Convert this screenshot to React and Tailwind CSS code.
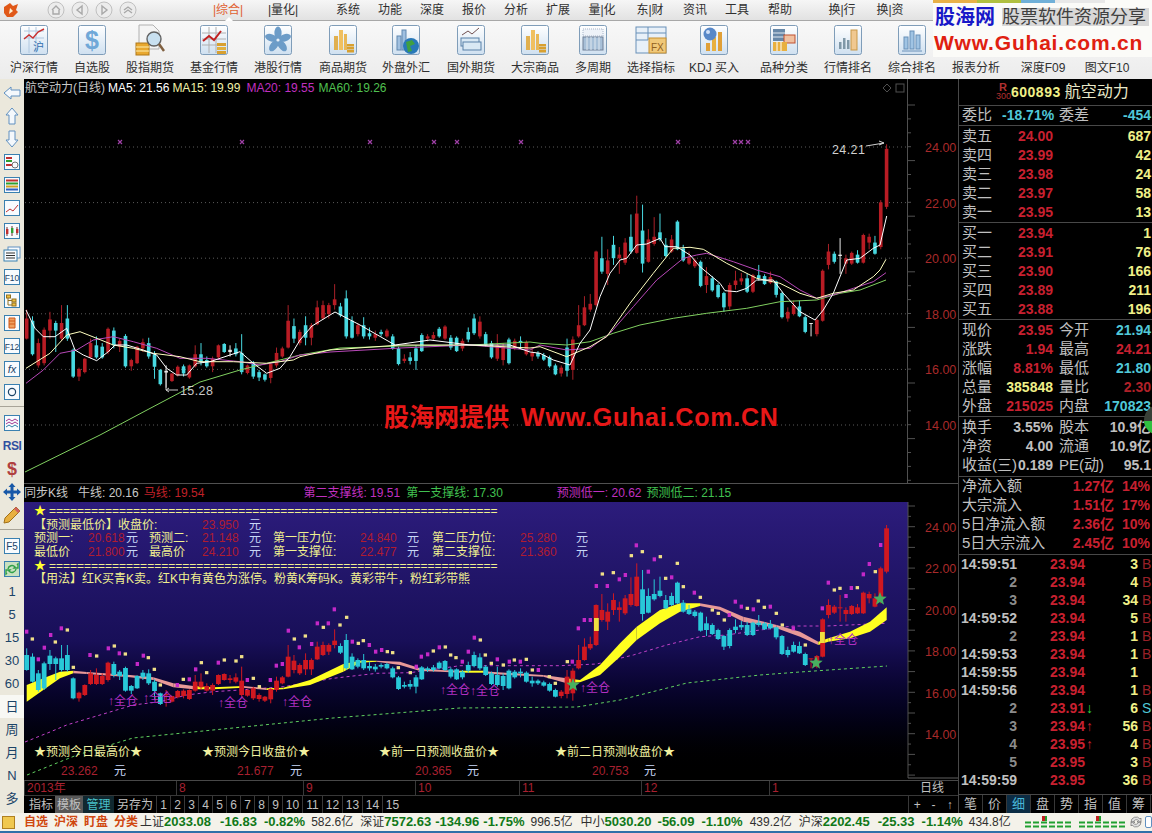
import React from "react";

// candles: body top, body bottom, wick top, wick bottom (lower pane pixels x3), colour in the upper pane
const CANDLES = [
  [195,240,175,242,"r"],[200,275,190,278,"c"],[250,300,240,305,"r"],[220,295,215,300,"r"],[197,222,180,240,"r"],
  [205,222,200,270,"c"],[205,240,165,245,"r"],[195,240,165,245,"c"],[265,325,262,328,"c"],[308,325,305,335,"r"],
  [285,315,283,318,"r"],[250,282,240,285,"r"],[255,282,235,285,"c"],[258,282,250,285,"c"],[218,270,215,275,"r"],
  [222,255,215,262,"c"],[245,258,240,270,"r"],[234,302,230,305,"c"],[288,302,285,312,"r"],[258,295,256,297,"r"],
  [248,262,240,270,"r"],[250,280,238,285,"c"],[275,303,268,330,"c"],[310,342,308,345,"c"],[312,316,300,350,"w"],
  [318,335,318,337,"r"],[303,322,300,325,"r"],[302,318,298,325,"c"],[300,327,298,330,"r"],[275,302,255,305,"r"],
  [275,292,250,300,"c"],[288,302,280,305,"c"],[285,302,280,315,"r"],[255,282,253,285,"r"],[252,270,250,272,"c"],
  [265,270,255,280,"w"],[262,275,250,280,"c"],[272,315,230,320,"c"],[300,317,298,320,"r"],[295,325,290,330,"c"],
  [315,327,310,335,"c"],[320,332,318,336,"c"],[297,328,295,340,"r"],[272,300,260,305,"r"],[262,280,258,283,"r"],
  [200,260,165,262,"r"],[212,240,195,250,"c"],[225,250,220,255,"r"],[210,238,190,255,"c"],[210,238,205,255,"r"],
  [170,208,155,210,"r"],[165,195,155,198,"r"],[165,185,160,195,"r"],[152,165,118,175,"r"],[168,188,160,192,"c"],
  [150,235,132,240,"c"],[200,238,190,240,"c"],[210,230,205,235,"r"],[210,235,192,240,"c"],[228,235,215,242,"c"],
  [230,238,222,245,"r"],[225,230,220,235,"c"],[222,235,218,238,"r"],[235,262,230,265,"c"],[262,297,258,300,"c"],
  [285,290,275,295,"r"],[282,290,270,298,"c"],[262,290,255,310,"c"],[232,268,228,270,"c"],[235,240,230,246,"r"],
  [232,240,225,245,"r"],[218,235,214,238,"c"],[213,240,210,243,"r"],[238,260,232,265,"c"],[238,268,235,270,"c"],
  [245,262,240,268,"r"],[225,242,215,248,"c"],[195,228,185,232,"c"],[202,235,190,240,"r"],[230,255,225,258,"c"],
  [250,282,245,285,"c"],[255,285,230,290,"r"],[258,288,250,300,"r"],[242,295,238,298,"c"],[245,262,240,266,"r"],
  [245,250,235,262,"c"],[248,275,244,278,"r"],[272,280,260,290,"r"],[272,280,268,285,"c"],[277,287,272,290,"c"],
  [282,302,278,305,"c"],[300,320,296,322,"c"],[305,318,300,325,"r"],[260,312,240,325,"c"],[242,310,235,332,"r"],
  [210,235,165,238,"r"],[170,210,145,212,"r"],[162,175,140,180,"r"],[45,165,43,168,"r"],[60,90,12,95,"c"],
  [65,95,40,120,"r"],[30,60,10,75,"c"],[52,60,35,95,"r"],[25,70,15,75,"r"],[12,45,-38,50,"c"],
  [-40,48,-80,50,"r"],[-2,72,-60,92,"c"],[18,68,-5,70,"r"],[12,28,-32,32,"r"],[2,18,-40,22,"c"],
  [30,55,15,58,"c"],[18,45,8,48,"r"],[-22,40,-25,42,"c"],[38,65,30,68,"c"],[58,72,45,75,"r"],
  [65,78,60,82,"r"],[68,122,65,125,"c"],[100,120,80,138,"r"],[105,132,100,135,"c"],[120,147,116,150,"c"],
  [138,170,135,180,"c"],[120,168,115,175,"r"],[110,120,88,130,"r"],[105,112,93,120,"r"],[105,135,95,138,"c"],
  [98,135,95,138,"r"],[98,105,75,110,"c"],[100,118,96,120,"c"],[102,115,90,118,"r"],[112,142,110,148,"c"],
  [138,192,135,195,"c"],[180,195,170,202,"r"],[165,185,155,188,"r"],[168,190,155,192,"c"],[192,225,188,228,"c"],
  [205,207,205,235,"w"],[198,230,195,235,"r"],[88,200,85,202,"r"],[45,75,28,85,"r"],[50,68,45,72,"c"],
  [52,55,15,95,"w"],[60,72,52,95,"r"],[48,72,45,75,"r"],[52,70,42,72,"c"],[8,70,5,72,"r"],
  [12,25,5,40,"r"],[25,50,10,52,"c"],[-65,35,-70,40,"r"],[-185,-55,-195,-50,"r"],
];

const candleX = (i) => 26.7 + i * 5.81;
const lowY = (v) => 590 + v / 3;
const topY = (v) => 147 + (lowY(v) - 527) * 1.34;

// lower pane colouring goes by stretches, not by open/close
const lowCyan = (x) => x <= 76 || (x >= 113 && x <= 161) || (x >= 338 && x <= 556) || (x >= 640 && x <= 806);

const z8 = (p) => [p[0] / 3, 80 + p[1] / 3];
const z9 = (p) => [540 + p[0] / 3, 130 + p[1] / 3];
const line = (...parts) => parts.flat().map((p) => p[0].toFixed(1) + "," + p[1].toFixed(1)).join(" ");

const MA5 = line(
  [[78,690],[105,745],[130,770],[165,770],[200,745],[225,810],[250,825],[290,842],[325,815],[345,795],[380,795],[430,810],[470,825],[500,865],[530,885],[560,885],[590,850],[630,845],[690,825],[720,815],[760,850],[800,880],[840,865],[870,830],[900,780]].map(z8),
  [[312,326],[335,312],[360,325],[395,345],[430,340],[470,345],[510,345],[530,352]],
  [[0,670],[40,690],[90,705],[120,640],[150,600],[180,500],[210,430],[240,390],[260,385],[290,345],[320,342],[360,325],[375,350],[410,350],[450,375],[480,410],[540,460],[555,482],[590,485],[620,475],[650,450],[700,450],[730,490],[780,545],[825,570],[850,540],[880,490],[920,390],[960,385],[1000,355],[1020,345],[1040,258]].map(z9)
);
const MA15 = line(
  [[78,865],[150,820],[200,765],[240,755],[290,775],[340,795],[400,805],[460,820],[540,830],[600,845],[700,845],[800,850],[880,840],[900,830]].map(z8),
  [[330,350],[400,345],[470,345],[530,348]],
  [[0,650],[80,680],[150,650],[200,620],[270,520],[340,430],[400,355],[450,352],[490,358],[560,400],[650,445],[720,460],[780,490],[830,505],[880,490],[940,480],[1000,440],[1020,420],[1038,388]].map(z9)
);
const MA20 = line(
  [[78,910],[130,870],[180,820],[230,810],[280,780],[340,770],[400,785],[470,805],[540,835],[620,835],[720,845],[780,855],[840,845],[900,825]].map(z8),
  [[330,352],[400,348],[470,345],[530,350]],
  [[0,645],[80,660],[150,655],[210,610],[280,530],[350,450],[430,385],[470,375],[500,370],[580,395],[650,420],[720,440],[780,480],[830,505],[880,495],[940,475],[1000,455],[1038,428]].map(z9)
);
const MA60 = line(
  [[25,472],[100,435],[147,410],[200,382],[240,370],[300,355],[340,348],[400,346],[470,345],[530,342]],
  [[0,640],[80,645],[150,635],[220,610],[300,585],[400,565],[500,550],[620,535],[720,515],[830,510],[900,490],[960,480],[1038,450]].map(z9)
);

const RIBBON = [
  [80,285,335,"y"],[130,265,300,"y"],[180,245,265,"y"],[220,242,250,"p"],[260,246,252,"p"],[390,255,262,"p"],[460,262,270,"p"],[520,280,292,"p"],[580,288,298,"y"],[640,292,298,"y"],[730,288,293,"p"],[800,295,300,"y"],[850,293,298,"y"],[930,270,285,"y"],[1030,222,245,"y"],[1080,212,218,"y"],[1130,212,215,"p"],[1200,215,225,"p"],[1260,235,243,"p"],[1320,240,245,"p"],[1380,242,248,"y"],[1450,242,248,"p"],[1470,245,252,"p"],[1630,255,260,"p"],[1700,265,280,"y"],[1740,270,277,"y"],[1800,225,255,"y"],[1860,160,200,"y"],[1910,110,150,"y"],[1980,60,100,"y"],[2040,40,65,"y"],[2100,40,48,"p"],[2160,50,60,"p"],[2230,80,95,"p"],[2330,105,115,"p"],[2400,125,140,"p"],[2455,155,165,"y"],[2485,145,155,"y"],[2550,125,145,"y"],[2610,95,125,"y"],[2660,52,90,"y"],
];

const z10 = (p) => [p[0] / 3, 590 + p[1] / 3];
const z11 = (p) => [460 + p[0] / 3, 520 + p[1] / 3];

const DOTS_M = [
  ...[[80,125],[115,208],[133,173],[152,135],[184,115],[270,195],[325,175],[358,190],[412,222],[430,197],[587,238],[655,218],[742,270],[811,270],[829,227],[847,222],[865,122],[898,172],[935,162],[952,100],[985,100],[1003,58],[1057,155],[1108,165],[1127,185],[1145,180],[1249,230],[1264,200],[1283,193],[1318,172],[568,268],[532,285]].map(z10),
  ...[[7,425],[25,395],[43,353],[112,418],[148,425],[181,425],[235,450],[337,425],[355,325],[373,300],[391,300],[409,198],[442,198],[478,178],[496,165],[529,76],[565,155],[583,118],[635,172],[703,218],[808,285],[826,245],[844,260],[880,268],[931,260],[1000,325],[1087,265],[1105,188],[1158,228],[1174,204],[1210,163],[1228,132],[1262,75]].map(z11),
];
const DOTS_C = [
  ...[[97,147],[202,120],[166,156],[220,232],[290,198],[343,168],[376,192],[445,203],[463,238],[481,285],[550,268],[604,218],[620,248],[673,210],[708,213],[725,200],[760,265],[778,290],[883,147],[916,138],[970,112],[1020,105],[1040,82],[1075,160],[1090,152],[1162,185],[1178,188],[1195,233],[1231,248],[1300,183],[1336,171],[1352,195],[1368,203]].map(z10),
  ...[[61,360],[76,405],[94,430],[130,435],[163,420],[199,418],[217,450],[268,470],[286,490],[322,425],[427,162],[460,158],[514,107],[547,95],[601,110],[617,175],[652,130],[670,200],[721,232],[757,270],[775,280],[793,300],[862,265],[895,243],[913,262],[949,280],[967,315],[1036,375],[1123,210],[1140,205],[1192,203],[1246,155]].map(z11),
];

const PURPLE_DASH = line(
  [[25,742],[50,732]],
  [[200,405],[300,375],[400,345],[480,335],[560,315],[640,305],[720,300],[850,290],[1000,265],[1130,250],[1230,248]].map(z10),
  [[0,437],[300,437],[410,432],[520,405],[620,375],[720,350],[800,345],[900,330],[1000,318],[1100,318],[1280,310]].map(z11)
);
const GREEN_DASH = line([[27,775],[77,755],[133,738],[233,728],[333,718],[460,708],[577,707],[620,700],[687,683],[760,675],[800,672],[887,666]]);

const TOP_TICKS = [24, 22, 20, 18, 16, 14];
const tickY = (p) => 147 + (24 - p) * 27.8;
const lowTickY = (p) => 527 + (24 - p) * 20.7;

function star(cx, cy, r) {
  const pts = [];
  for (let i = 0; i < 10; i++) {
    const a = -Math.PI / 2 + (i * Math.PI) / 5;
    const rr = i % 2 ? r * 0.42 : r;
    pts.push([cx + rr * Math.cos(a), cy + rr * Math.sin(a)]);
  }
  return line(pts);
}

function TopChart() {
  return (
    <div className="relative h-[404px]">
      <svg viewBox="24 79 934 404" className="block w-full h-full">
        {TOP_TICKS.map((p) => (
          <line key={p} x1="25" x2="907" y1={tickY(p)} y2={tickY(p)} stroke="#5a5a5a" strokeDasharray="1 3" />
        ))}
        <line x1="907.5" x2="907.5" y1="79" y2="483" stroke="#505050" />
        {Array.from({ length: 28 }, (_, i) => (
          <line key={i} x1="908" x2={i % 4 ? 911 : 915} y1={105 + i * 13.9} y2={105 + i * 13.9} stroke="#505050" />
        ))}
        {TOP_TICKS.map((p) => (
          <text key={p} x="925" y={tickY(p) + 5} fill="#a82a2a" fontSize="12.5">{p.toFixed(2)}</text>
        ))}
        {[120, 242, 370, 434, 457, 521, 678, 735, 741, 748].map((x) => (
          <path key={x} d={`M${x - 2} 140l4 4m0 -4l-4 4`} stroke="#a040a8" strokeWidth="1.2" fill="none" />
        ))}
        {CANDLES.map((c, i) => {
          const x = candleX(i);
          const col = c[4] === "r" ? "#b81c24" : c[4] === "c" ? "#48d8e0" : "#e8e8e8";
          const t = topY(c[0]);
          const b = topY(c[1]);
          return (
            <g key={i}>
              <line x1={x} x2={x} y1={topY(c[2])} y2={topY(c[3])} stroke={c[4] === "r" ? "#a82028" : col} />
              <rect x={x - 1.8} width="3.6" y={t} height={Math.max(b - t, 1)} fill={col} />
            </g>
          );
        })}
        <polyline points={MA60} fill="none" stroke="#80d060" strokeWidth="1" />
        <polyline points={MA20} fill="none" stroke="#b848b8" strokeWidth="1" />
        <polyline points={MA15} fill="none" stroke="#ffffc0" strokeWidth="1" />
        <polyline points={MA5} fill="none" stroke="#ffffff" strokeWidth="1" />
        <text x="832" y="154" fill="#d0d0d0" fontSize="12.5" letterSpacing="0.4">24.21</text>
        <path d="M866 146l18 -3m-5 -2l5 2l-5 2" fill="none" stroke="#d0d0d0" />
        <path d="M166 372v18h12m-12 0l3 -2m-3 2l3 2" fill="none" stroke="#c8c8c8" />
        <text x="180" y="395" fill="#c8c8c8" fontSize="12.5" letterSpacing="0.4">15.28</text>
        <path d="M887 84l4 4l-4 4l-4 -4z" fill="none" stroke="#505050" />
        <rect x="896" y="84" width="8" height="8" fill="none" stroke="#505050" />
      </svg>
      <div className="absolute left-[1px] top-[1px] flex text-[12px] leading-[16px] text-[#c8c8c8] whitespace-nowrap">
        <span>航空动力(日线)</span>
        <span className="ml-[3px] text-white">MA5: 21.56</span>
        <span className="ml-[3px] text-[#f0f0a8]">MA15: 19.99</span>
        <span className="ml-[6px] text-[#c030c0]">MA20: 19.55</span>
        <span className="ml-[4px] text-[#50c050]">MA60: 19.26</span>
      </div>
      <div className="absolute left-[360px] top-[323px] flex items-center font-bold text-[#e81818] whitespace-nowrap">
        <span className="text-[25px] leading-[30px]">股海网提供</span>
        <span className="ml-[12px] text-[25px] leading-[30px] tracking-[0.8px]">Www.Guhai.Com.CN</span>
      </div>
    </div>
  );
}

function LowChart() {
  return (
    <div className="relative h-[278px] flex">
      <div className="w-[884px] bg-gradient-to-b from-[#2c1c7c] via-[#180f58] to-[#000000]" />
      <svg viewBox="24 502 934 278" className="absolute left-0 top-0 w-[934px] h-[278px]">
        <line x1="908" x2="908" y1="502" y2="778" stroke="#505050" />
        <line x1="908" x2="958" y1="778" y2="778" stroke="#606060" />
        {Array.from({ length: 28 }, (_, i) => (
          <line key={i} x1="908" x2={i % 2 ? 911 : 915} y1={506 + i * 10.35} y2={506 + i * 10.35} stroke="#505050" />
        ))}
        {TOP_TICKS.map((p) => (
          <text key={p} x="925" y={lowTickY(p) + 5} fill="#a82a2a" fontSize="12.5">{p.toFixed(2)}</text>
        ))}
        <polyline points={PURPLE_DASH} fill="none" stroke="#c040c8" strokeDasharray="3 3" />
        <polyline points={GREEN_DASH} fill="none" stroke="#60d060" strokeDasharray="3 3" />
        {RIBBON.slice(0, -1).map((r, i) => {
          const n = RIBBON[i + 1];
          const pts = line([[r[0], r[1]], [n[0], n[1]], [n[0], n[2]], [r[0], r[2]]].map(z10));
          return <polygon key={i} points={pts} fill={r[3] === "y" ? "#ffff20" : "#e89898"} />;
        })}
        {CANDLES.map((c, i) => {
          const x = candleX(i);
          const col = lowCyan(x) ? "#28c8d8" : "#d01820";
          const t = lowY(c[0]);
          const b = lowY(c[1]);
          return (
            <g key={i}>
              <line x1={x} x2={x} y1={lowY(c[2])} y2={lowY(c[3])} stroke={col} />
              <rect x={x - 2.4} width="4.8" y={t} height={Math.max(b - t, 1)} fill={col} />
            </g>
          );
        })}
        <rect x="594" y="618" width="4.8" height="13" fill="#f0e040" />
        <rect x="820" y="632" width="4.8" height="11" fill="#f0e040" />
        {DOTS_M.map((p, i) => (
          <rect key={i} x={p[0] - 1.7} y={p[1] - 2} width="3.4" height="4" fill="#c428c8" />
        ))}
        {DOTS_C.map((p, i) => (
          <rect key={i} x={p[0] - 1.7} y={p[1] - 1.6} width="3.4" height="3.2" fill="#f0e088" />
        ))}
        <polygon points={star(573, 685, 7)} fill="#48b060" />
        <polygon points={star(816, 663, 7)} fill="#48b060" />
        <polygon points={star(880, 599, 7)} fill="#48b060" />
        {[[108, 705], [143, 702], [218, 707], [282, 706], [440, 694], [470, 695], [580, 692], [828, 644]].map((p, i) => (
          <text key={i} x={p[0]} y={p[1]} fill="#b030c0" fontSize="12">↑全仓</text>
        ))}
      </svg>

      <div className="absolute left-[10px] top-[2px] w-[570px] text-[12px] leading-[14px] text-[#f0f090] grid auto-rows-[13.7px] grid-cols-[54px_38px_23px_53px_47px_24px_87px_47px_25px_88px_56px_20px] whitespace-nowrap">
        <div className="col-span-12 flex items-center overflow-hidden">
          <span className="text-[#ffff30]">★</span><span className="ml-[3px]">{"=".repeat(64)}</span>
        </div>
        <div className="col-span-12 flex">
          <span className="w-[168px]">【预测最低价】收盘价:</span>
          <span className="w-[47px] text-[#b01c30]">23.950</span>
          <span className="text-[#c8d8f8]">元</span>
        </div>
        {[
          ["预测一:", "20.618", "预测二:", "21.148", "第一压力位:", "24.840", "第二压力位:", "25.280"],
          ["最低价", "21.800", "最高价", "24.210", "第一支撑位:", "22.477", "第二支撑位:", "21.360"],
        ].map((r) => (
          <React.Fragment key={r[0]}>
            <span>{r[0]}</span>
            <span className="text-[#b01c30]">{r[1]}</span>
            <span className="text-[#c8d8f8]">元</span>
            <span>{r[2]}</span>
            <span className="text-[#b01c30]">{r[3]}</span>
            <span className="text-[#c8d8f8]">元</span>
            <span>{r[4]}</span>
            <span className="text-[#b01c30]">{r[5]}</span>
            <span className="text-[#c8d8f8]">元</span>
            <span>{r[6]}</span>
            <span className="text-[#b01c30]">{r[7]}</span>
            <span className="text-[#c8d8f8]">元</span>
          </React.Fragment>
        ))}
        <div className="col-span-12 flex items-center overflow-hidden">
          <span className="text-[#ffff30]">★</span><span className="ml-[3px]">{"=".repeat(64)}</span>
        </div>
        <div className="col-span-12">【用法】红K买青K卖。红K中有黄色为涨停。粉黄K筹码K。黄彩带牛，粉红彩带熊</div>
      </div>

      <div className="absolute left-[10px] top-[243px] text-[12px] leading-[14px] text-[#f0f0a0] flex whitespace-nowrap">
        <span className="w-[168px]">★预测今日最高价★</span>
        <span className="w-[177px]">★预测今日收盘价★</span>
        <span className="w-[176px]">★前一日预测收盘价★</span>
        <span>★前二日预测收盘价★</span>
      </div>
      <div className="absolute left-[37px] top-[262px] text-[12px] leading-[14px] flex whitespace-nowrap">
        <span className="w-[53px] text-[#a82030]">23.262</span>
        <span className="w-[123px] text-[#c8d8f8]">元</span>
        <span className="w-[53px] text-[#a82030]">21.677</span>
        <span className="w-[125px] text-[#c8d8f8]">元</span>
        <span className="w-[52px] text-[#a82030]">20.365</span>
        <span className="w-[125px] text-[#c8d8f8]">元</span>
        <span className="w-[52px] text-[#a82030]">20.753</span>
        <span className="text-[#c8d8f8]">元</span>
      </div>
    </div>
  );
}

const MENU = [
  ["|综合|", "w-[34px] text-[#e06030]", "ml-[211px]"], ["|量化|", "w-[34px]", "ml-[21px]"],
  ["系统", "w-[30px]", "ml-[33px]"], ["功能", "w-[30px]", "ml-[12px]"], ["深度", "w-[30px]", "ml-[12px]"],
  ["报价", "w-[30px]", "ml-[12px]"], ["分析", "w-[30px]", "ml-[12px]"], ["扩展", "w-[30px]", "ml-[12px]"],
  ["量|化", "w-[34px]", "ml-[12px]"], ["东|财", "w-[34px]", "ml-[14px]"], ["资讯", "w-[30px]", "ml-[13px]"],
  ["工具", "w-[30px]", "ml-[12px]"], ["帮助", "w-[30px]", "ml-[13px]"], ["换|行", "w-[34px]", "ml-[30px]"],
  ["换|资", "w-[34px]", "ml-[14px]"],
];

const Tile = ({ children }) => (
  <svg width="28" height="30" viewBox="0 0 28 30">
    <defs>
      <linearGradient id="tileBg" x1="0" y1="0" x2="0" y2="1">
        <stop offset="0" stopColor="#ffffff" />
        <stop offset="1" stopColor="#cfe0f0" />
      </linearGradient>
    </defs>
    <rect x="0.5" y="0.5" width="27" height="29" rx="2" fill="url(#tileBg)" stroke="#7f9db9" />
    {children}
  </svg>
);

const GoldBars = () => (
  <>
    <rect x="5" y="11" width="4" height="14" fill="#e0b050" />
    <rect x="10" y="5" width="4" height="20" fill="#f0c060" />
    <rect x="15" y="9" width="3" height="16" fill="#e8b858" />
    <rect x="18" y="19" width="7" height="2.5" fill="#d8a030" />
    <rect x="18" y="22" width="7" height="2.5" fill="#d8a030" />
    <rect x="18" y="25" width="7" height="2.5" fill="#d8a030" />
  </>
);

const Globe = () => (
  <>
    <rect x="5" y="11" width="4" height="14" fill="#a0c0e0" stroke="#6088b0" />
    <rect x="10" y="5" width="4" height="20" fill="#a0c0e0" stroke="#6088b0" />
    <circle cx="19" cy="21" r="8" fill="#2878b8" />
    <path d="M14 17l6 -2l3 4l-5 2l2 5l-4 1z" fill="#40a040" />
  </>
);

const TOOLS = [
  ["沪深行情", "w-[64px]", <Tile><path d="M4 6h20M4 13h20M9 2v26M16 2v26" stroke="#b0c8e0" fill="none" /><path d="M4 14l5 -4l4 3l5 -6l6 -3" stroke="#c83030" strokeWidth="1.4" fill="none" /><text x="13" y="26" fontSize="11" fill="#3070b0">沪</text></Tile>],
  ["自选股", "w-[52px]", <Tile><text x="14" y="24" fontSize="25" fontWeight="bold" textAnchor="middle" fill="#70a8d8">$</text></Tile>],
  ["股指期货", "w-[64px]", <svg width="30" height="32" viewBox="0 0 30 32"><path d="M4 1h14l6 6v18H4z" fill="#f4f4f4" stroke="#b0b0b0" /><rect x="1" y="19" width="13" height="12" fill="#e8a830" stroke="#b07818" /><path d="M1 23h13M1 27h13" stroke="#fff0b0" /><circle cx="19" cy="15" r="7" fill="#c8e0f0" stroke="#606060" strokeWidth="1.4" /><path d="M24 20l5 7" stroke="#806040" strokeWidth="2.5" /></svg>],
  ["基金行情", "w-[64px]", <Tile><path d="M2 8h24M2 14h24M2 20h24M9 2v26M16 2v26" stroke="#b0b0b0" fill="none" /><path d="M3 16l6 -5l5 4l7 -9" stroke="#c02020" strokeWidth="2" fill="none" /><rect x="17" y="18" width="9" height="3" fill="#d8a030" /><rect x="17" y="22" width="9" height="3" fill="#e0b040" /><rect x="17" y="26" width="9" height="3" fill="#d8a030" /></Tile>],
  ["港股行情", "w-[64px]", <Tile>{[0, 72, 144, 216, 288].map((a) => <ellipse key={a} cx="14" cy="8" rx="3.6" ry="6.5" fill="#6c9cc8" transform={`rotate(${a} 14 15)`} />)}<circle cx="14" cy="15" r="1.6" fill="#e8f0f8" /></Tile>],
  ["商品期货", "w-[66px]", <Tile><GoldBars /></Tile>],
  ["外盘外汇", "w-[60px]", <Tile><Globe /></Tile>],
  ["国外期货", "w-[70px]", <Tile><path d="M5 10l6 -4l4 3l7 -6" stroke="#705050" fill="none" /><rect x="4" y="13" width="18" height="8" fill="#d8e8f4" stroke="#5880a8" /><rect x="6" y="17" width="18" height="8" fill="#d8e8f4" stroke="#5880a8" /></Tile>],
  ["大宗商品", "w-[58px]", <Tile><GoldBars /></Tile>],
  ["多周期", "w-[58px]", <Tile><path d="M4 4h20v7H4z" fill="#eef2f8" stroke="#a8b4c8" strokeDasharray="1 1" /><rect x="4" y="12" width="20" height="13" fill="#a8c0d8" stroke="#708098" /><path d="M8 12v13M12 12v13M16 12v13M20 12v13" stroke="#e0e8f0" /></Tile>],
  ["选择指标", "w-[58px]", <svg width="32" height="30" viewBox="0 0 32 30"><rect x="1" y="2" width="30" height="26" fill="#e8f0f8" stroke="#6890b8" /><path d="M1 8h30M1 15h12M13 2v13" stroke="#6890b8" /><rect x="14" y="13" width="17" height="15" fill="#f0c878" stroke="#c89030" /><text x="16" y="26" fontSize="10" fill="#906020">FX</text></svg>],
  ["KDJ 买入", "w-[68px]", <Tile><rect x="6" y="18" width="4" height="8" fill="#e0a038" /><rect x="12" y="12" width="4" height="14" fill="#e8b040" /><rect x="18" y="7" width="4" height="19" fill="#e0a038" /><circle cx="10" cy="9" r="6.5" fill="#5888c8" /><circle cx="8" cy="7" r="2" fill="#d0e0f8" /></Tile>],
  ["品种分类", "w-[72px]", <Tile><rect x="3" y="4" width="12" height="12" fill="#6888a8" /><path d="M3 8h12M3 12h12" stroke="#e0e8f0" /><rect x="14" y="10" width="11" height="8" fill="#f0c0a0" stroke="#c05030" /><rect x="3" y="17" width="14" height="9" fill="#e8b040" /><path d="M7 17v9M11 17v9" stroke="#fff" /></Tile>],
  ["行情排名", "w-[56px]", <Tile><rect x="5" y="17" width="2.5" height="7" fill="#8098a8" /><rect x="9" y="13" width="2.5" height="11" fill="#8098a8" /><rect x="13" y="15" width="2.5" height="9" fill="#8098a8" /><rect x="17" y="5" width="6" height="20" fill="#f0c890" stroke="#c89848" /></Tile>],
  ["综合排名", "w-[72px]", <Tile><rect x="6" y="12" width="4" height="12" fill="#a0c4e4" stroke="#6890b8" /><rect x="12" y="6" width="4" height="18" fill="#a0c4e4" stroke="#6890b8" /><rect x="18" y="10" width="4" height="14" fill="#a0c4e4" stroke="#6890b8" /><path d="M4 26h20" stroke="#6890b8" /></Tile>],
  ["报表分析", "w-[56px]", null],
  ["深度F09", "w-[78px]", null],
  ["图文F10", "w-[50px]", null],
];

function NavBall({ d }) {
  return (
    <svg width="18" height="18" viewBox="0 0 18 18" className="mr-[6px]">
      <circle cx="9" cy="9" r="8" fill="#ececec" stroke="#c0c0c0" />
      <path d={d} fill="none" stroke="#a8a8a8" strokeWidth="1.4" />
    </svg>
  );
}

function Header() {
  return (
    <div className="relative h-[79px] text-[#303030]">
      <div className="h-[21px] flex items-center bg-gradient-to-b from-[#f6f6f6] to-[#e2e2e2] border-b border-[#a8a8a8] text-[12px] whitespace-nowrap relative">
        <svg width="16" height="16" viewBox="0 0 16 16" className="absolute left-[3px] top-[2px]">
          <path d="M1 5l6 -4l3 3l5 -2l-2 6l2 2l-5 5H4l-3 -4z" fill="#e05818" />
          <path d="M7 6l3 3l-4 3z" fill="#fff0d0" />
        </svg>
        <div className="absolute left-[47px] top-[1px] flex">
          <NavBall d="M5 9l4 -4l4 4M6 9v4h6v-4" />
          <NavBall d="M11 5l-5 4l5 4z" />
          <NavBall d="M7 5l5 4l-5 4z" />
          <NavBall d="M5 9l4 -3l4 3M5 12l4 -3l4 3" />
        </div>
        {MENU.map(([t, w, ml]) => (
          <span key={t} className={`${ml} ${w} text-center`}>{t}</span>
        ))}
        <span className="absolute left-[225px] bottom-[-1px] w-0 h-0 border-x-[4px] border-x-transparent border-b-[4px] border-b-[#ffffff]" />
      </div>
      <div className="h-[58px] flex pl-[2px] bg-gradient-to-b from-[#f8f8f8] to-[#ececec] text-[12px]">
        {TOOLS.map(([t, w, icon]) => (
          <div key={t} className={`${w} flex flex-col items-center justify-end pb-[3px] whitespace-nowrap`}>
            {icon && <div className="h-[34px] flex items-center">{icon}</div>}
            <span className="leading-[16px] mt-[3px]">{t}</span>
          </div>
        ))}
      </div>
      <div className="absolute right-0 top-0 w-[219px] h-[57px] bg-[#fbfbf8] flex flex-col">
        <div className="h-[3px] flex">
          <span className="w-[44px] bg-[#e8b048]" /><span className="w-[44px] bg-[#b0c040]" /><span className="w-[34px] bg-[#70b0d8]" /><span className="w-[50px] bg-[#e8e8e8]" />
        </div>
        <div className="flex items-center h-[27px] pl-[2px]">
          <span className="text-[20px] font-bold text-[#1818c8] leading-[24px]">股海网</span>
          <span className="ml-[7px] w-[147px] text-[18px] leading-[18px] text-[#404040] bg-[#d8d8d8] whitespace-nowrap">股票软件资源分享</span>
        </div>
        <div className="pl-[1px] text-[21px] leading-[25px] font-bold tracking-[0.8px] text-[#e02010] whitespace-nowrap">Www.Guhai.com.cn</div>
      </div>
    </div>
  );
}

const Box = ({ children }) => (
  <svg width="16" height="16" viewBox="0 0 16 16">
    <rect x="0.5" y="0.5" width="15" height="15" fill="#f8fbfe" stroke="#3a80b0" />
    {children}
  </svg>
);

const RAIL_A = [
  <svg width="18" height="16" viewBox="0 0 18 16"><path d="M1 8l7 -6v3h9v6H8v3z" fill="#f4f8fc" stroke="#6090c0" /></svg>,
  <svg width="16" height="18" viewBox="0 0 16 18"><path d="M8 1l6 7h-3v9H5V8H2z" fill="#f4f8fc" stroke="#6090c0" /></svg>,
  <svg width="16" height="18" viewBox="0 0 16 18"><path d="M8 17l6 -7h-3V1H5v9H2z" fill="#f4f8fc" stroke="#6090c0" /></svg>,
  <Box><path d="M2 4h6" stroke="#c03030" strokeWidth="2" /><path d="M2 7h6" stroke="#30a030" strokeWidth="2" /><path d="M2 11h6" stroke="#c03030" strokeWidth="2" /><circle cx="11" cy="11" r="3" fill="none" stroke="#707070" /></Box>,
  <Box><path d="M2 3.500h12" stroke="#c03030" strokeWidth="2" /><path d="M2 6.500h12" stroke="#30a030" strokeWidth="2" /><path d="M2 9.500h12" stroke="#d0a020" strokeWidth="2" /><path d="M2 12.500h12" stroke="#3060c0" strokeWidth="2" /></Box>,
  <Box><path d="M2 12l4 -3l3 2l5 -6" fill="none" stroke="#c03030" /></Box>,
  <Box><path d="M3 4v9M8 3v10M13 4v8" stroke="#703030" /><rect x="2" y="6" width="2.4" height="5" fill="#c03030" /><rect x="7" y="5" width="2.4" height="5" fill="#30a030" /><rect x="12" y="6" width="2.4" height="4" fill="#c03030" /></Box>,
  <svg width="18" height="16" viewBox="0 0 18 16"><rect x="5" y="1" width="12" height="11" fill="#f8fbfe" stroke="#6090c0" /><rect x="1" y="4" width="13" height="11" fill="#f8fbfe" stroke="#3a80b0" /><path d="M3 7h9M3 9.500h9M3 12h9" stroke="#303030" /></svg>,
  <Box><text x="8" y="11.500" fontSize="8.500" textAnchor="middle" fill="#1c4468">F10</text></Box>,
  <Box><rect x="2.500" y="3" width="4" height="3" fill="#f0c040" stroke="#907020" /><rect x="8" y="7" width="4" height="3" fill="#f0c040" stroke="#907020" /><rect x="8" y="11" width="4" height="3" fill="#f0c040" stroke="#907020" /><path d="M4 6v7h4M4 8.500h4" fill="none" stroke="#907020" /></Box>,
  <Box><path d="M5 3h6v10H5zM5 6h6M5 9h6" fill="#f0a060" stroke="#d05818" /></Box>,
  <Box><text x="8" y="11.500" fontSize="8.500" textAnchor="middle" fill="#1c4468">F12</text></Box>,
  <Box><text x="8" y="12" fontSize="11" fontStyle="italic" textAnchor="middle" fill="#1c4468">fx</text></Box>,
  <Box><circle cx="8" cy="8" r="3.600" fill="none" stroke="#1c4468" strokeWidth="1.2" /></Box>,
];

const RAIL_B = [
  <Box><path d="M2 6l3 -2l3 2l3 -2l3 2M2 9l3 -2l3 2l3 -2l3 2" fill="none" stroke="#a03890" /><path d="M2 12l3 -2l3 2l3 -2l3 2" fill="none" stroke="#3080a8" /></Box>,
  <span className="text-[12px] font-bold text-[#3050a0] tracking-[-0.5px]">RSI</span>,
  <span className="text-[18px] leading-[20px] font-bold text-[#b04040]">$</span>,
  <svg width="18" height="18" viewBox="0 0 18 18"><path d="M9 0l3.500 4h-2v3.500H14v-2l4 3.500l-4 3.500v-2h-3.500V14h2L9 18l-3.500 -4h2v-3.500H4v2L0 9l4 -3.500v2h3.500V4h-2z" fill="#1858a8" /></svg>,
  <svg width="18" height="18" viewBox="0 0 18 18"><path d="M13 1l4 4L6 16l-5 1l1 -5z" fill="#e8b040" stroke="#a07018" /><path d="M13 1l4 4l-2 2l-4 -4z" fill="#d06060" /></svg>,
];

function Rail() {
  const cell = "h-[23px] flex items-center justify-center";
  return (
    <div className="w-[24px] shrink-0 bg-[#ebe8dc] pt-[2px] text-[#1c4468] text-[13px]">
      {RAIL_A.map((ic, i) => <div key={i} className={cell}>{ic}</div>)}
      <div className="h-px mt-[3px] mb-[4px] bg-[#a8a498]" />
      {RAIL_B.map((ic, i) => <div key={i} className={cell}>{ic}</div>)}
      <div className="h-px mt-[3px] mb-[4px] bg-[#a8a498]" />
      <div className={cell}><Box><text x="8" y="12" fontSize="10" textAnchor="middle" fill="#1c4468">F5</text></Box></div>
      <div className={cell}><Box><rect x="1" y="1" width="14" height="14" fill="#c8e0c0" /><path d="M4 8a4 4 0 0 1 7 -2l-1 1h4V3l-1 1M12 8a4 4 0 0 1 -7 2l1 -1H2v4l1 -1" fill="none" stroke="#30a048" strokeWidth="1.4" /></Box></div>
      {["1", "5", "15", "30", "60"].map((t) => <div key={t} className={cell}>{t}</div>)}
      <div className={`${cell} bg-[#f8f8f4]`}>日</div>
      {["周", "月", "N", "多"].map((t) => <div key={t} className={cell}>{t}</div>)}
    </div>
  );
}

const RED = "text-[#c82030]";
const YEL = "text-[#f0f088]";
const CYA = "text-[#50c8d8]";
const GRY = "text-[#c0c0c0]";

const ASK = [["卖五", "24.00", "687"], ["卖四", "23.99", "42"], ["卖三", "23.98", "24"], ["卖二", "23.97", "58"], ["卖一", "23.95", "13"]];
const BID = [["买一", "23.94", "1"], ["买二", "23.91", "76"], ["买三", "23.90", "166"], ["买四", "23.89", "211"], ["买五", "23.88", "196"]];
const QUOTE = [
  ["现价", "23.95", RED, "今开", "21.94", CYA],
  ["涨跌", "1.94", RED, "最高", "24.21", RED],
  ["涨幅", "8.81%", RED, "最低", "21.80", CYA],
  ["总量", "385848", YEL, "量比", "2.30", "text-[#b02028]"],
  ["外盘", "215025", RED, "内盘", "170823", CYA],
];
const FUND = [
  ["换手", "3.55%", "股本", "10.9亿"],
  ["净资", "4.00", "流通", "10.9亿"],
  ["收益(三)", "0.189", "PE(动)", "95.1"],
];
const MONEY = [["净流入额", "1.27亿", "14%"], ["大宗流入", "1.51亿", "17%"], ["5日净流入额", "2.36亿", "10%"], ["5日大宗流入", "2.45亿", "10%"]];
const TICKS = [
  ["14:59:51", "23.94", "", "3", "B"], ["2", "23.94", "", "4", "B"], ["3", "23.94", "", "34", "B"],
  ["14:59:52", "23.94", "", "5", "B"], ["2", "23.94", "", "1", "B"], ["14:59:53", "23.94", "", "1", "B"],
  ["14:59:55", "23.94", "", "1", ""], ["14:59:56", "23.94", "", "1", "B"], ["2", "23.91", "↓", "6", "S"],
  ["3", "23.94", "↑", "56", "B"], ["4", "23.95", "↑", "4", "B"], ["5", "23.95", "", "3", "B"],
  ["14:59:59", "23.95", "", "36", "B"],
];

function QuoteRow({ a, b, c, d, bc = GRY, dc = GRY }) {
  return (
    <div className="flex h-[19px] items-center pl-[3px] whitespace-nowrap">
      <span className={`w-[40px] text-[15px] ${GRY}`}>{a}</span>
      <span className={`w-[51px] text-right font-bold text-[14px] ${bc}`}>{b}</span>
      <span className={`ml-[6px] w-[36px] text-[15px] ${GRY}`}>{c}</span>
      <span className={`w-[56px] text-right font-bold text-[14px] ${dc}`}>{d}</span>
    </div>
  );
}

function SidePanel() {
  const ln = "border-b border-[#484848]";
  return (
    <div className="w-[194px] shrink-0 bg-black border-l border-[#484848] relative overflow-hidden">
      <div className={`h-[27px] flex items-center pl-[37px] ${ln} whitespace-nowrap`}>
        <div className="w-[14px] text-center leading-[9px] text-[#b03030]">
          <div className="text-[11px] font-bold">R</div>
          <div className="text-[9px]">300</div>
        </div>
        <span className="ml-px text-[14px] font-bold text-[#f0f088] tracking-[0.5px]">600893</span>
        <span className="ml-[4px] text-[16px] text-[#e8e8c8]">航空动力</span>
      </div>
      <div className={`h-[20px] ${ln}`}>
        <QuoteRow a="委比" b="-18.71%" c="委差" d="-454" bc={CYA} dc={CYA} />
      </div>
      <div className={`${ln} pt-[1px]`}>
        {ASK.map((r) => <QuoteRow key={r[0]} a={r[0]} b={r[1]} d={r[2]} bc={RED} dc={YEL} />)}
      </div>
      <div className={`${ln} pt-[1px]`}>
        {BID.map((r) => <QuoteRow key={r[0]} a={r[0]} b={r[1]} d={r[2]} bc={RED} dc={YEL} />)}
      </div>
      <div className={`${ln} pt-[1px]`}>
        {QUOTE.map((r) => <QuoteRow key={r[0]} a={r[0]} b={r[1]} bc={r[2]} c={r[3]} d={r[4]} dc={r[5]} />)}
      </div>
      <div className={`${ln} pt-[1px] pb-[1px]`}>
        {FUND.map((r) => <QuoteRow key={r[0]} a={r[0]} b={r[1]} c={r[2]} d={r[3]} />)}
      </div>
      <div className={`${ln} pb-[1px]`}>
        {MONEY.map((r) => (
          <div key={r[0]} className="flex h-[19px] items-center pl-[3px] whitespace-nowrap">
            <span className={`w-[106px] text-[15px] ${GRY}`}>{r[0]}</span>
            <span className={`w-[46px] text-right font-bold text-[14px] ${RED}`}>{r[1]}</span>
            <span className={`w-[36px] text-right font-bold text-[14px] ${RED}`}>{r[2]}</span>
          </div>
        ))}
      </div>
      <div className={`h-[240px] ${ln}`}>
        {TICKS.map((r, i) => (
          <div key={i} className="flex h-[18px] items-center font-bold text-[14px] whitespace-nowrap">
            <span className={`w-[58px] text-right ${r[0].length > 1 ? GRY : "text-[#8c8c8c]"}`}>{r[0]}</span>
            <span className={`ml-[33px] w-[36px] ${RED}`}>{r[1]}</span>
            <span className={`w-[16px] ${r[2] === "↓" ? "text-[#30d840]" : RED}`}>{r[2]}</span>
            <span className={`w-[36px] text-right ${YEL}`}>{r[3]}</span>
            <span className={`ml-[4px] font-normal ${r[4] === "S" ? CYA : "text-[#982028]"}`}>{r[4]}</span>
          </div>
        ))}
      </div>
      <div className="h-[18px] flex text-[13px] text-[#c0c0c0]">
        {["笔", "价", "细", "盘", "势", "指", "值", "筹"].map((t) => (
          <span key={t} className={`w-[24px] text-center border-r border-[#383838] leading-[18px] ${t === "细" ? "bg-[#0c2c44] text-[#48b8d8]" : ""}`}>{t}</span>
        ))}
      </div>
      <div className="absolute right-[-22px] top-[326px] w-[30px] h-[30px] rounded-full bg-[#384038] overflow-hidden flex items-end">
        <div className="w-full h-[14px] bg-[#30c040]" />
      </div>
    </div>
  );
}

const TIME_MARKS = [
  ["2013年", "w-[152px]"], ["8", "w-[127px]"], ["9", "w-[112px]"], ["10", "w-[104px]"], ["11", "w-[122px]"], ["12", "w-[128px]"], ["1", "w-[138px]"],
];

function BottomRows() {
  return (
    <>
      <div className="h-[15px] flex border-t border-[#484848] text-[12px] leading-[14px] text-[#a82030]">
        {TIME_MARKS.map(([t, w]) => (
          <span key={t} className={`${w} pl-[2px] border-l border-[#383838] whitespace-nowrap`}>{t}</span>
        ))}
        <span className="pl-[13px] text-[#c0c0c0] whitespace-nowrap">日线</span>
      </div>
      <div className="h-[18px] flex items-center border-t border-[#383838] text-[12px] text-[#c0c0c0] whitespace-nowrap">
        <span className="ml-[3px] w-[28px] text-center">指标</span>
        <span className="w-[28px] text-center leading-[18px] bg-[#585858]">模板</span>
        <span className="w-[31px] text-center text-[#48c0c8] leading-[18px] bg-[#102830]">管理</span>
        <span className="w-[42px] text-center">另存为</span>
        {Array.from({ length: 9 }, (_, i) => (
          <span key={i} className="w-[14px] text-center border-l border-[#383838] leading-[18px]">{i + 1}</span>
        ))}
        {[10, 11, 12, 13, 14, 15].map((n) => (
          <span key={n} className="w-[20px] text-center border-l border-[#383838] leading-[18px]">{n}</span>
        ))}
        <span className="ml-auto w-[50px] flex text-center border-l border-[#383838]">
          <span className="w-[17px]">+</span><span className="w-[16px]">-</span><span className="w-[17px]">↑</span>
        </span>
      </div>
    </>
  );
}

function StatusBar() {
  const G = "font-bold text-[13px] text-[#107818]";
  return (
    <div className="h-[20px] flex items-center bg-[#f4f2ea] border-b-[2px] border-[#3070a8] text-[12px] text-[#303030] whitespace-nowrap">
      <span className="ml-[2px] w-[13px] h-[13px] bg-[#f0c850] border border-[#b08020] shrink-0" />
      <span className="ml-[9px] font-bold text-[#d04810] flex gap-[6px]">
        <span>自选</span><span>沪深</span><span>盯盘</span><span>分类</span>
      </span>
      <span className="ml-[2px]">上证</span><span className={G}>2033.08</span>
      <span className={`${G} ml-[9px]`}>-16.83</span><span className={`${G} ml-[7px]`}>-0.82%</span>
      <span className="ml-[6px]">582.6亿</span>
      <span className="ml-[7px]">深证</span><span className={G}>7572.63</span>
      <span className={`${G} ml-[4px]`}>-134.96</span><span className={`${G} ml-[4px]`}>-1.75%</span>
      <span className="ml-[6px]">996.5亿</span>
      <span className="ml-[8px]">中小</span><span className={G}>5030.20</span>
      <span className={`${G} ml-[6px]`}>-56.09</span><span className={`${G} ml-[7px]`}>-1.10%</span>
      <span className="ml-[7px]">439.2亿</span>
      <span className="ml-[7px]">沪深</span><span className={G}>2202.45</span>
      <span className={`${G} ml-[8px]`}>-25.33</span><span className={`${G} ml-[7px]`}>-1.14%</span>
      <span className="ml-[6px]">434.8亿</span>
      <svg width="104" height="14" viewBox="0 0 104 14" className="ml-[13px] shrink-0">
        {[0, 1].map((g) => (
          <g key={g} transform={`translate(${g * 54} 0)`}>
            <path d="M1 7.500h47M1 11.500h47" stroke="#20a030" strokeWidth="2" strokeDasharray="6 2" />
            <rect x="18" y="1" width="3" height="5" fill="#c02020" />
            <rect x="21" y="1" width="2" height="5" fill="#20a030" />
          </g>
        ))}
      </svg>
      <svg width="16" height="16" viewBox="0 0 16 16" className="shrink-0">
        <path d="M3 8a5 5 0 0 1 9 -3l1 -1v4H9l1.500 -1.500a3 3 0 0 0 -5 1.500zM13 8a5 5 0 0 1 -9 3l-1 1V8h4l-1.500 1.500a3 3 0 0 0 5 -1.500z" fill="#e0e0e0" stroke="#707070" strokeWidth="0.7" />
      </svg>
      <span className="ml-[1px] w-[8px] h-[12px] bg-white border border-[#6090c0] rounded-[2px]" />
    </div>
  );
}

export default function App() {
  return (
    <div className="w-[1152px] h-[833px] overflow-hidden bg-black font-['Liberation_Sans','Noto_Sans_CJK_SC',sans-serif] flex flex-col">
      <Header />
      <div className="flex h-[734px]">
        <Rail />
        <div className="w-[934px] shrink-0 flex flex-col bg-black">
          <TopChart />
          <div className="h-[19px] flex items-center border-t border-[#505050] text-[12px] text-[#c8c8c8] whitespace-nowrap">
            <span>同步K线</span>
            <span className="ml-[10px]">牛线: 20.16</span>
            <span className="ml-[5px] text-[#c02028]">马线: 19.54</span>
            <span className="ml-[99px] text-[#c030c0]">第二支撑线: 19.51</span>
            <span className="ml-[6px] text-[#40c050]">第一支撑线: 17.30</span>
            <span className="ml-[54px] text-[#c030c0]">预测低一: 20.62</span>
            <span className="ml-[5px] text-[#40c050]">预测低二: 21.15</span>
          </div>
          <LowChart />
          <BottomRows />
        </div>
        <SidePanel />
      </div>
      <StatusBar />
    </div>
  );
}
